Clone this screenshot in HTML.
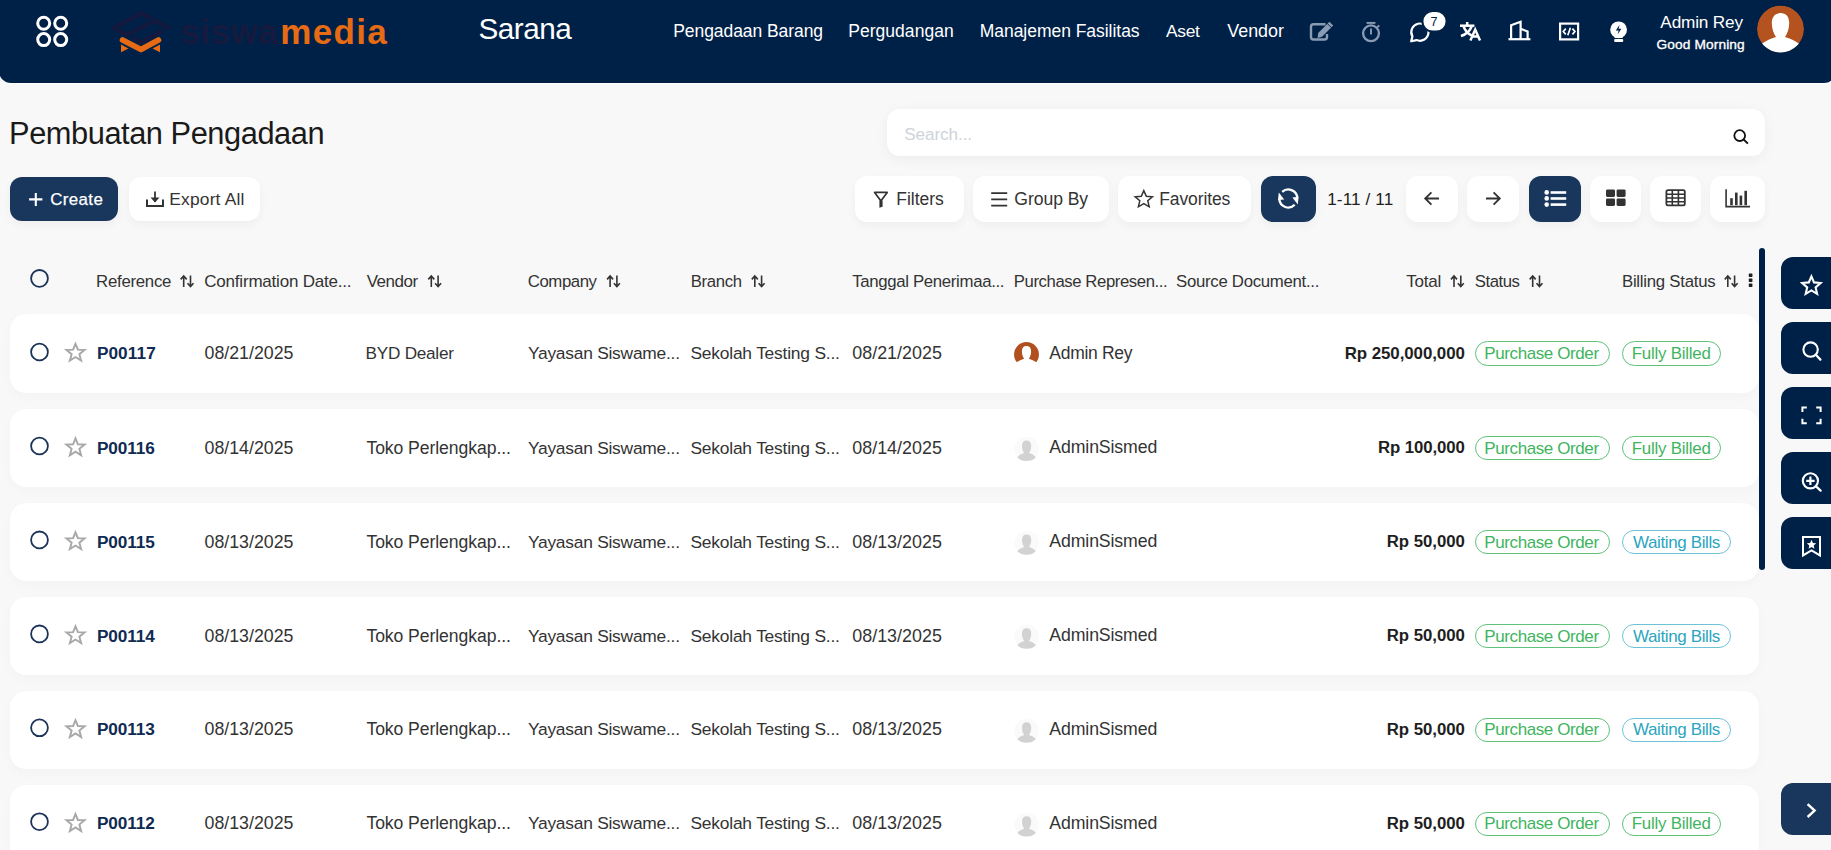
<!DOCTYPE html>
<html><head><meta charset="utf-8">
<style>

*{box-sizing:border-box;margin:0;padding:0}
html,body{width:1831px;height:850px;overflow:hidden;background:#f8f8f8;font-family:"Liberation Sans",sans-serif}
.t{position:absolute;white-space:nowrap}
.b{position:absolute}
svg{position:absolute;overflow:visible}
</style></head><body>

<div class="b" style="left:-1px;top:0;width:1837px;height:83px;background:#002147;border-radius:0 0 12px 12px;box-shadow:0 1px 0 #fff"></div>
<svg style="left:0;top:0" width="100" height="80"><g fill="none" stroke="#fff" stroke-width="3"><circle cx="43.7" cy="23.2" r="6"/><circle cx="60.7" cy="23.2" r="6"/><circle cx="43.7" cy="39.6" r="6"/><circle cx="60.7" cy="39.6" r="6"/></g></svg>
<svg style="left:0;top:0" width="200" height="80"><g fill="none" stroke="#141a3f" stroke-width="4.4" stroke-linecap="round" stroke-linejoin="round"><path d="M149,17.5 L141,13.3 L114,28 L127,35 L155,20.5 L169,28"/><path d="M161,31.5 L141,42.5 L134,38.5"/></g><polyline points="122.5,40 141,49.5 158.5,40" fill="none" stroke="#e66b14" stroke-width="5.6" stroke-linecap="round" stroke-linejoin="round"/><path d="M121,44.5 L121,52.2 L128.5,48.5Z M160,44.5 L160,52.2 L152.5,48.5Z" fill="#e66b14"/></svg>
<div class="t" style="left:180.20px;top:14.00px;font-size:35px;line-height:35px;letter-spacing:0.565px;color:#161a3e;font-weight:bold;">siswa</div>
<div class="t" style="left:280.24px;top:14.00px;font-size:35px;line-height:35px;letter-spacing:1.355px;color:#e66b14;font-weight:bold;">media</div>
<div class="t" style="left:478.40px;top:13.95px;font-size:29.7px;line-height:29.7px;letter-spacing:-0.460px;color:#fff;">Sarana</div>
<div class="t" style="left:673.20px;top:23.29px;font-size:17.5px;line-height:17.5px;letter-spacing:-0.061px;color:#fff;">Pengadaan Barang</div>
<div class="t" style="left:848.20px;top:23.29px;font-size:17.5px;line-height:17.5px;letter-spacing:0.042px;color:#fff;">Pergudangan</div>
<div class="t" style="left:979.70px;top:23.29px;font-size:17.5px;line-height:17.5px;letter-spacing:-0.031px;color:#fff;">Manajemen Fasilitas</div>
<div class="t" style="left:1166.00px;top:23.34px;font-size:17.4px;line-height:17.4px;letter-spacing:-0.293px;color:#fff;">Aset</div>
<div class="t" style="left:1227.22px;top:23.09px;font-size:17.9px;line-height:17.9px;letter-spacing:0.016px;color:#fff;">Vendor</div>
<svg style="left:0;top:0" width="1831" height="83"><path d="M1325.5,24.2 H1313.5 a2.5,2.5 0 0 0 -2.5,2.5 V37 a2.5,2.5 0 0 0 2.5,2.5 H1324.5 a2.5,2.5 0 0 0 2.5,-2.5 V34" fill="none" stroke="#8a9cb4" stroke-width="2.4"/><path d="M1317.6,38 L1318.2,33 L1329.4,21.8 L1333.2,25.6 L1322,36.8 Z" fill="#8a9cb4"/><path d="M1327.4,23.6 L1331.4,27.6" stroke="#002147" stroke-width="0.9"/><circle cx="1371" cy="33.3" r="7.9" fill="none" stroke="#8a9cb4" stroke-width="2.3"/><path d="M1366.6,22.9 H1375.4" stroke="#8a9cb4" stroke-width="1.9"/><path d="M1371,28.5 V34.5" stroke="#8a9cb4" stroke-width="1.9"/><path d="M1377.2,27.4 L1379.2,25.4" stroke="#8a9cb4" stroke-width="2"/><path d="M1412.4,36.4 A8.6,8.6 0 1 1 1416.6,40.1 L1411.2,41.3 Z" fill="none" stroke="#fff" stroke-width="2.2" stroke-linejoin="round"/><rect x="1422.4" y="11" width="24.2" height="20.6" rx="10.3" fill="#fff" stroke="#002147" stroke-width="2"/><g fill="none" stroke="#fff" stroke-width="2.5" stroke-linecap="butt"><path d="M1460,25.7 H1474.4"/><path d="M1467.2,22 V25.5"/><path d="M1463.6,26.5 Q1466,33 1472,35.6"/><path d="M1471.6,26.5 Q1469,33.5 1461,36"/><path d="M1470.4,40.5 L1475.2,29.6 L1480,40.5 M1472.2,36.6 H1478.2"/></g><g fill="none" stroke="#fff" stroke-width="2.2" stroke-linejoin="miter"><path d="M1511.1,39 V25.2 L1520.6,21.8 V39"/><path d="M1520.6,28.8 L1527.6,31.4 V39"/><path d="M1508.5,39.2 H1530.4"/></g><rect x="1560.1" y="23.6" width="18" height="15.8" fill="none" stroke="#fff" stroke-width="2.2"/><path d="M1565.8,28.6 L1563.3,31.5 L1565.8,34.4 M1572.4,28.6 L1574.9,31.5 L1572.4,34.4 M1570.4,27.8 L1567.8,35.2" fill="none" stroke="#fff" stroke-width="1.7"/><circle cx="1618.6" cy="29.8" r="8.4" fill="#fff"/><path d="M1614.2,34 L1623,34 L1622.6,38 L1614.6,38Z" fill="#fff"/><rect x="1614.2" y="39" width="9" height="2.9" rx="1" fill="#fff"/><path d="M1619.6,24.8 L1615.8,30.6 H1618.6 L1617.6,34.6 L1621.4,28.8 H1618.6 Z" fill="#002147"/></svg>
<div class="t" style="left:1430.56px;top:15.65px;font-size:12.5px;line-height:12.5px;letter-spacing:0.000px;color:#002147;">7</div>
<div class="t" style="left:1660.36px;top:13.76px;font-size:17.2px;line-height:17.2px;letter-spacing:-0.175px;color:#fff;">Admin Rey</div>
<div class="t" style="left:1656.56px;top:37.57px;font-size:13.7px;line-height:13.7px;letter-spacing:0.131px;color:#fff;-webkit-text-stroke:0.35px #fff">Good Morning</div>
<svg style="left:0;top:0" width="1831" height="83"><defs><clipPath id="ca"><circle cx="1780.5" cy="29" r="23.5"/></clipPath></defs><g clip-path="url(#ca)"><circle cx="1780.5" cy="29" r="23.5" fill="#b4531f"/><path transform="translate(1780.5,29) scale(1.89)" d="M0,-8.4 C-2.9,-8.4 -4.6,-6.6 -4.6,-3 C-4.6,0 -3.6,2.6 -2.4,4.2 C-5,5 -7.8,6.2 -9.5,7.6 L-14,10 V14 H14 V10 L9.5,7.6 C7.8,6.2 5,5 2.4,4.2 C3.6,2.6 4.6,0 4.6,-3 C4.6,-6.6 2.9,-8.4 0,-8.4Z" fill="#fff"/></g></svg>
<div class="t" style="left:9.10px;top:119.14px;font-size:30.8px;line-height:30.8px;letter-spacing:-0.456px;color:#1a1a1a;">Pembuatan Pengadaan</div>
<div class="b" style="left:887px;top:108.6px;width:878px;height:47.8px;background:#fff;border-radius:13px;box-shadow:0 3px 14px rgba(0,0,0,.05)"></div>
<div class="t" style="left:904.28px;top:126.44px;font-size:17.2px;line-height:17.2px;letter-spacing:-0.115px;color:#cdd3d9;">Search...</div>
<svg style="left:0;top:0" width="1831" height="200"><circle cx="1739.7" cy="135.6" r="5.4" fill="none" stroke="#111" stroke-width="1.8"/><path d="M1743.6,139.5 L1747.2,143" stroke="#111" stroke-width="1.9" stroke-linecap="square"/></svg>
<div class="b" style="left:10px;top:177px;width:108px;height:44px;background:#19365c;border-radius:12px;box-shadow:0 4px 10px rgba(0,0,0,.045)"></div>
<div class="b" style="left:129px;top:177px;width:131px;height:44px;background:#fff;border-radius:12px;box-shadow:0 4px 10px rgba(0,0,0,.045)"></div>
<div class="t" style="left:50.20px;top:191.91px;font-size:16.9px;line-height:16.9px;letter-spacing:0.380px;color:#fff;-webkit-text-stroke:0.25px #fff">Create</div>
<svg style="left:0;top:0" width="300" height="240"><path d="M35.8,192.9 V205.9 M29.1,199.4 H42.4" stroke="#fff" stroke-width="2.1"/><path d="M147,199.5 V206 H163 V199.5" fill="none" stroke="#333" stroke-width="2"/><path d="M155,191.5 V202" stroke="#333" stroke-width="1.8"/><path d="M150.5,197.5 L155,202.5 L159.5,197.5Z" fill="#333"/></svg>
<div class="t" style="left:169.26px;top:191.17px;font-size:17.4px;line-height:17.4px;letter-spacing:0.187px;color:#333;">Export All</div>
<div class="b" style="left:855px;top:176px;width:109px;height:46px;background:#fff;border-radius:12px;box-shadow:0 4px 10px rgba(0,0,0,.045)"></div>
<div class="b" style="left:973px;top:176px;width:136px;height:46px;background:#fff;border-radius:12px;box-shadow:0 4px 10px rgba(0,0,0,.045)"></div>
<div class="b" style="left:1118px;top:176px;width:133px;height:46px;background:#fff;border-radius:12px;box-shadow:0 4px 10px rgba(0,0,0,.045)"></div>
<div class="b" style="left:1261px;top:176px;width:55px;height:46px;background:#19365c;border-radius:12px;box-shadow:0 4px 10px rgba(0,0,0,.045)"></div>
<div class="b" style="left:1406px;top:176px;width:52px;height:46px;background:#fff;border-radius:12px;box-shadow:0 4px 10px rgba(0,0,0,.045)"></div>
<div class="b" style="left:1467px;top:176px;width:52px;height:46px;background:#fff;border-radius:12px;box-shadow:0 4px 10px rgba(0,0,0,.045)"></div>
<div class="b" style="left:1529px;top:176px;width:52px;height:46px;background:#19365c;border-radius:12px;box-shadow:0 4px 10px rgba(0,0,0,.045)"></div>
<div class="b" style="left:1590px;top:176px;width:51px;height:46px;background:#fff;border-radius:12px;box-shadow:0 4px 10px rgba(0,0,0,.045)"></div>
<div class="b" style="left:1650px;top:176px;width:51px;height:46px;background:#fff;border-radius:12px;box-shadow:0 4px 10px rgba(0,0,0,.045)"></div>
<div class="b" style="left:1710px;top:176px;width:55px;height:46px;background:#fff;border-radius:12px;box-shadow:0 4px 10px rgba(0,0,0,.045)"></div>
<div class="t" style="left:896.34px;top:191.12px;font-size:17.5px;line-height:17.5px;letter-spacing:-0.037px;color:#333;">Filters</div>
<div class="t" style="left:1014.34px;top:190.56px;font-size:17.6px;line-height:17.6px;letter-spacing:-0.071px;color:#333;">Group By</div>
<div class="t" style="left:1159.20px;top:190.61px;font-size:17.5px;line-height:17.5px;letter-spacing:-0.105px;color:#333;">Favorites</div>
<div class="t" style="left:1327.20px;top:191.31px;font-size:17.1px;line-height:17.1px;letter-spacing:0.128px;color:#222;">1-11 / 11</div>
<svg style="left:0;top:0" width="1831" height="240"><path d="M874.6,192.4 H887.2 L881.2,200.6 L880.6,200.6 Z" fill="none" stroke="#333" stroke-width="1.7" stroke-linejoin="round"/><path d="M879.4,200.4 H882.6 V206.8 L879.4,207.8 Z" fill="#333"/><path d="M991.2,193.1 H1007.2 M991.2,199.4 H1007.2 M991.2,205.6 H1007.2" stroke="#333" stroke-width="1.7"/><path d="M1143.8,190.6 L1146.3,196.3 L1152.4,196.8 L1147.8,200.8 L1149.2,206.8 L1143.8,203.6 L1138.4,206.8 L1139.8,200.8 L1135.2,196.8 L1141.3,196.3 Z" fill="none" stroke="#333" stroke-width="1.5" stroke-linejoin="miter"/><g fill="none" stroke="#fff" stroke-width="2.3"><path d="M1282.2,191.9 A9,9 0 0 1 1297.3,197.6"/><path d="M1294.7,204.8 A9,9 0 0 1 1279.3,199.2"/></g><path d="M1292.4,197.4 L1298.6,196.8 L1297.8,204.4Z M1284.2,199.4 L1278,200 L1278.8,192.4Z" fill="#fff"/><path d="M1439,198.5 H1425.6 M1431.4,192.4 L1425.2,198.5 L1431.4,204.6" fill="none" stroke="#333" stroke-width="1.8"/><path d="M1486,198.5 H1499.4 M1493.6,192.4 L1499.8,198.5 L1493.6,204.6" fill="none" stroke="#333" stroke-width="1.8"/><g fill="#fff"><circle cx="1546.7" cy="192.4" r="2.3"/><circle cx="1546.7" cy="198.4" r="2.3"/><circle cx="1546.7" cy="204.6" r="2.3"/><rect x="1550.6" y="191.2" width="15.6" height="2.6"/><rect x="1550.6" y="197.2" width="15.6" height="2.6"/><rect x="1550.6" y="203.3" width="15.6" height="2.6"/></g><g fill="#333"><rect x="1606" y="189.4" width="9" height="7.6" rx="1.4"/><rect x="1616.6" y="189.4" width="9" height="7.6" rx="1.4"/><rect x="1606" y="198.4" width="9" height="7.6" rx="1.4"/><rect x="1616.6" y="198.4" width="9" height="7.6" rx="1.4"/></g><rect x="1666.4" y="190.2" width="18.4" height="15.2" rx="1.6" fill="none" stroke="#333" stroke-width="1.8"/><path d="M1666.4,194.2 H1684.8 M1666.4,198 H1684.8 M1666.4,201.8 H1684.8 M1672.3,190.2 V205.4 M1678.4,190.2 V205.4" stroke="#333" stroke-width="1.6"/><path d="M1726.1,189.2 V206.6 H1750" fill="none" stroke="#333" stroke-width="1.6"/><g fill="#333"><rect x="1730.2" y="198.2" width="2.6" height="7"/><rect x="1735" y="192.6" width="2.6" height="12.6"/><rect x="1739.6" y="195.6" width="2.6" height="9.6"/><rect x="1744.4" y="190.8" width="2.6" height="14.4"/></g></svg>
<svg style="left:0;top:0" width="1831" height="850"><circle cx="39.5" cy="278.4" r="8.4" fill="none" stroke="#1b3358" stroke-width="1.8"/></svg>
<div class="t" style="left:96.12px;top:273.80px;font-size:16.8px;line-height:16.8px;letter-spacing:-0.272px;color:#333;">Reference</div>
<div class="t" style="left:204.28px;top:273.00px;font-size:17.0px;line-height:17.0px;letter-spacing:-0.204px;color:#333;">Confirmation Date...</div>
<div class="t" style="left:366.72px;top:273.00px;font-size:17.0px;line-height:17.0px;letter-spacing:-0.496px;color:#333;">Vendor</div>
<div class="t" style="left:527.84px;top:273.80px;font-size:16.8px;line-height:16.8px;letter-spacing:-0.457px;color:#333;">Company</div>
<div class="t" style="left:690.70px;top:273.85px;font-size:16.7px;line-height:16.7px;letter-spacing:-0.288px;color:#333;">Branch</div>
<div class="t" style="left:852.14px;top:273.80px;font-size:16.8px;line-height:16.8px;letter-spacing:-0.326px;color:#333;">Tanggal Penerimaa...</div>
<div class="t" style="left:1013.84px;top:273.85px;font-size:16.7px;line-height:16.7px;letter-spacing:-0.400px;color:#333;">Purchase Represen...</div>
<div class="t" style="left:1176.06px;top:273.80px;font-size:16.8px;line-height:16.8px;letter-spacing:-0.296px;color:#333;">Source Document...</div>
<div class="t" style="left:1406.36px;top:273.00px;font-size:17.0px;line-height:17.0px;letter-spacing:-0.260px;color:#333;">Total</div>
<div class="t" style="left:1474.78px;top:273.85px;font-size:16.7px;line-height:16.7px;letter-spacing:-0.444px;color:#333;">Status</div>
<div class="t" style="left:1621.98px;top:273.80px;font-size:16.8px;line-height:16.8px;letter-spacing:-0.258px;color:#333;">Billing Status</div>
<svg style="left:0;top:0" width="1831" height="850"><path d="M183.7,287 V276.2 M180.7,279.4 L183.7,276 L186.7,279.4" fill="none" stroke="#333" stroke-width="1.6"/><path d="M190.5,275.6 V286.4 M187.5,283.2 L190.5,286.6 L193.5,283.2" fill="none" stroke="#333" stroke-width="1.6"/><path d="M431.3,287 V276.2 M428.3,279.4 L431.3,276 L434.3,279.4" fill="none" stroke="#333" stroke-width="1.6"/><path d="M438.1,275.6 V286.4 M435.1,283.2 L438.1,286.6 L441.1,283.2" fill="none" stroke="#333" stroke-width="1.6"/><path d="M610.1,287 V276.2 M607.1,279.4 L610.1,276 L613.1,279.4" fill="none" stroke="#333" stroke-width="1.6"/><path d="M616.9,275.6 V286.4 M613.9,283.2 L616.9,286.6 L619.9,283.2" fill="none" stroke="#333" stroke-width="1.6"/><path d="M754.8000000000001,287 V276.2 M751.8000000000001,279.4 L754.8000000000001,276 L757.8000000000001,279.4" fill="none" stroke="#333" stroke-width="1.6"/><path d="M761.6,275.6 V286.4 M758.6,283.2 L761.6,286.6 L764.6,283.2" fill="none" stroke="#333" stroke-width="1.6"/><path d="M1454.0,287 V276.2 M1451.0,279.4 L1454.0,276 L1457.0,279.4" fill="none" stroke="#333" stroke-width="1.6"/><path d="M1460.8,275.6 V286.4 M1457.8,283.2 L1460.8,286.6 L1463.8,283.2" fill="none" stroke="#333" stroke-width="1.6"/><path d="M1532.7,287 V276.2 M1529.7,279.4 L1532.7,276 L1535.7,279.4" fill="none" stroke="#333" stroke-width="1.6"/><path d="M1539.5,275.6 V286.4 M1536.5,283.2 L1539.5,286.6 L1542.5,283.2" fill="none" stroke="#333" stroke-width="1.6"/><path d="M1727.8,287 V276.2 M1724.8,279.4 L1727.8,276 L1730.8,279.4" fill="none" stroke="#333" stroke-width="1.6"/><path d="M1734.6,275.6 V286.4 M1731.6,283.2 L1734.6,286.6 L1737.6,283.2" fill="none" stroke="#333" stroke-width="1.6"/><g fill="#222"><rect x="1748.8" y="273.6" width="3.6" height="3.4" rx="0.6"/><rect x="1748.8" y="278.6" width="3.6" height="3.4" rx="0.6"/><rect x="1748.8" y="283.6" width="3.6" height="3.4" rx="0.6"/></g></svg>
<div class="b" style="left:1759px;top:248px;width:6px;height:321.5px;background:#002147;border-radius:3px"></div>
<div class="b" style="left:1781px;top:257px;width:70px;height:52px;background:#002147;border-radius:12px"></div>
<div class="b" style="left:1781px;top:322px;width:70px;height:52px;background:#002147;border-radius:12px"></div>
<div class="b" style="left:1781px;top:387px;width:70px;height:52px;background:#002147;border-radius:12px"></div>
<div class="b" style="left:1781px;top:452px;width:70px;height:52px;background:#002147;border-radius:12px"></div>
<div class="b" style="left:1781px;top:517px;width:70px;height:52px;background:#002147;border-radius:12px"></div>
<div class="b" style="left:1781px;top:783px;width:70px;height:52px;background:#19365c;border-radius:12px"></div>
<svg style="left:0;top:0" width="1831" height="850"><path transform="translate(0,1)" d="M1811.4,275.4 L1814,281.4 L1820.6,282 L1815.6,286.4 L1817.1,292.8 L1811.4,289.4 L1805.7,292.8 L1807.2,286.4 L1802.2,282 L1808.8,281.4 Z" fill="none" stroke="#fff" stroke-width="2.1" stroke-linejoin="miter"/><circle cx="1810.6" cy="349.6" r="7.2" fill="none" stroke="#fff" stroke-width="2.1"/><path d="M1815.8,354.8 L1820.4,359.6" stroke="#fff" stroke-width="2.3" stroke-linecap="round"/><path d="M1802.4,412 V407.6 H1806.8 M1816.2,407.6 H1820.6 V412 M1820.6,418.8 V423.2 H1816.2 M1806.8,423.2 H1802.4 V418.8" fill="none" stroke="#fff" stroke-width="2"/><circle cx="1810.4" cy="480.8" r="7.6" fill="none" stroke="#fff" stroke-width="2.1"/><path d="M1815.8,486.2 L1820.6,490.6" stroke="#fff" stroke-width="2.3" stroke-linecap="round"/><path d="M1810.4,476.6 V485 M1806.2,480.8 H1814.6" stroke="#fff" stroke-width="2.2"/><path d="M1803,537 H1820 V555.4 L1811.5,550.4 L1803,555.4 Z" fill="none" stroke="#fff" stroke-width="2" stroke-linejoin="miter"/><path d="M1811.5,539.8 L1812.9,543 L1816.2,543.3 L1813.7,545.5 L1814.4,548.8 L1811.5,547.1 L1808.6,548.8 L1809.3,545.5 L1806.8,543.3 L1810.1,543 Z" fill="#fff"/><path d="M1807.6,804.2 L1814.6,810.6 L1807.6,817" fill="none" stroke="#fff" stroke-width="2.4"/></svg>
<div class="b" style="left:10px;top:313.8px;width:1749px;height:79.4px;background:#fff;border-radius:16px;box-shadow:0 4px 12px rgba(0,0,0,.025)"></div>
<svg style="left:0;top:0" width="1831" height="850"><circle cx="39.5" cy="352.0" r="8.4" fill="none" stroke="#1b3358" stroke-width="1.8"/><path transform="translate(75.5,352.7) scale(0.925)" d="M0,-9.6 L2.6,-3.3 L9.8,-3 L4.2,1.6 L6.1,8.6 L0,4.7 L-6.1,8.6 L-4.2,1.6 L-9.8,-3 L-2.6,-3.3 Z" fill="none" stroke="#a8a8a8" stroke-width="2.1" stroke-linejoin="miter"/><circle cx="1026.5" cy="354.45" r="12.45" fill="#b24f1f"/><path transform="translate(1026.5,354.45)" d="M0,-8.4 C-2.9,-8.4 -4.6,-6.6 -4.6,-3 C-4.6,0 -3.6,2.6 -2.4,4.2 C-5,5 -7.8,6.2 -9.5,7.6 L-14,10 V14 H14 V10 L9.5,7.6 C7.8,6.2 5,5 2.4,4.2 C3.6,2.6 4.6,0 4.6,-3 C4.6,-6.6 2.9,-8.4 0,-8.4Z" fill="#fff"/></svg>
<div class="t" style="left:96.92px;top:345.20px;font-size:17.2px;line-height:17.2px;letter-spacing:0.096px;color:#0f2b52;font-weight:bold;">P00117</div>
<div class="t" style="left:204.50px;top:344.97px;font-size:17.8px;line-height:17.8px;letter-spacing:-0.002px;color:#333;">08/21/2025</div>
<div class="t" style="left:365.62px;top:344.50px;font-size:17.2px;line-height:17.2px;letter-spacing:-0.269px;color:#333;">BYD Dealer</div>
<div class="t" style="left:527.92px;top:345.17px;font-size:17.4px;line-height:17.4px;letter-spacing:-0.247px;color:#333;">Yayasan Siswame...</div>
<div class="t" style="left:690.42px;top:345.17px;font-size:17.4px;line-height:17.4px;letter-spacing:-0.205px;color:#333;">Sekolah Testing S...</div>
<div class="t" style="left:852.28px;top:344.92px;font-size:17.9px;line-height:17.9px;letter-spacing:0.007px;color:#333;">08/21/2025</div>
<div class="t" style="left:1049.36px;top:345.12px;font-size:17.5px;line-height:17.5px;letter-spacing:-0.308px;color:#333;">Admin Rey</div>
<div class="t" style="left:1344.70px;top:345.90px;font-size:16.9px;line-height:16.9px;letter-spacing:-0.074px;color:#1e1e1e;font-weight:bold;">Rp 250,000,000</div>
<div class="b" style="left:1475px;top:341.2px;width:135px;height:24.6px;border:1.2px solid #5fc27a;border-radius:13px"></div>
<div class="t" style="left:1484.34px;top:345.17px;font-size:17.0px;line-height:17.0px;letter-spacing:-0.406px;color:#3fb45e;">Purchase Order</div>
<div class="b" style="left:1621.6px;top:341.2px;width:99px;height:24.6px;border:1.2px solid #5fc27a;border-radius:13px"></div>
<div class="t" style="left:1631.76px;top:345.85px;font-size:16.9px;line-height:16.9px;letter-spacing:-0.229px;color:#3fb45e;">Fully Billed</div>
<div class="b" style="left:10px;top:409.1px;width:1749px;height:78px;background:#fff;border-radius:16px;box-shadow:0 4px 12px rgba(0,0,0,.025)"></div>
<svg style="left:0;top:0" width="1831" height="850"><circle cx="39.5" cy="446.0" r="8.4" fill="none" stroke="#1b3358" stroke-width="1.8"/><path transform="translate(75.5,447.3) scale(0.925)" d="M0,-9.6 L2.6,-3.3 L9.8,-3 L4.2,1.6 L6.1,8.6 L0,4.7 L-6.1,8.6 L-4.2,1.6 L-9.8,-3 L-2.6,-3.3 Z" fill="none" stroke="#a8a8a8" stroke-width="2.1" stroke-linejoin="miter"/><circle cx="1026.6" cy="448.90" r="12.2" fill="#fafafa"/><path transform="translate(1026.6,448.90)" d="M0,-8.4 C-2.9,-8.4 -4.6,-6.6 -4.6,-3 C-4.6,0 -3.6,2.6 -2.4,4.2 C-5,5 -7.6,6 -9.3,8.5 C-7,11 -3.6,12 0,12 C3.6,12 7,11 9.3,8.5 C7.6,6 5,5 2.4,4.2 C3.6,2.6 4.6,0 4.6,-3 C4.6,-6.6 2.9,-8.4 0,-8.4Z" fill="#d2d2d2"/></svg>
<div class="t" style="left:96.92px;top:440.08px;font-size:17.2px;line-height:17.2px;letter-spacing:-0.064px;color:#0f2b52;font-weight:bold;">P00116</div>
<div class="t" style="left:204.50px;top:439.78px;font-size:17.8px;line-height:17.8px;letter-spacing:-0.002px;color:#333;">08/14/2025</div>
<div class="t" style="left:366.42px;top:439.88px;font-size:17.6px;line-height:17.6px;letter-spacing:-0.071px;color:#333;">Toko Perlengkap...</div>
<div class="t" style="left:527.92px;top:439.98px;font-size:17.4px;line-height:17.4px;letter-spacing:-0.247px;color:#333;">Yayasan Siswame...</div>
<div class="t" style="left:690.42px;top:439.98px;font-size:17.4px;line-height:17.4px;letter-spacing:-0.205px;color:#333;">Sekolah Testing S...</div>
<div class="t" style="left:852.28px;top:439.73px;font-size:17.9px;line-height:17.9px;letter-spacing:0.007px;color:#333;">08/14/2025</div>
<div class="t" style="left:1049.36px;top:439.36px;font-size:17.7px;line-height:17.7px;letter-spacing:-0.126px;color:#333;">AdminSismed</div>
<div class="t" style="left:1378.06px;top:440.13px;font-size:16.8px;line-height:16.8px;letter-spacing:-0.102px;color:#1e1e1e;font-weight:bold;">Rp 100,000</div>
<div class="b" style="left:1475px;top:435.8px;width:135px;height:24.6px;border:1.2px solid #5fc27a;border-radius:13px"></div>
<div class="t" style="left:1484.34px;top:439.63px;font-size:17.0px;line-height:17.0px;letter-spacing:-0.406px;color:#3fb45e;">Purchase Order</div>
<div class="b" style="left:1621.6px;top:435.8px;width:99px;height:24.6px;border:1.2px solid #5fc27a;border-radius:13px"></div>
<div class="t" style="left:1631.76px;top:440.59px;font-size:16.9px;line-height:16.9px;letter-spacing:-0.229px;color:#3fb45e;">Fully Billed</div>
<div class="b" style="left:10px;top:503.0px;width:1749px;height:78px;background:#fff;border-radius:16px;box-shadow:0 4px 12px rgba(0,0,0,.025)"></div>
<svg style="left:0;top:0" width="1831" height="850"><circle cx="39.5" cy="539.9" r="8.4" fill="none" stroke="#1b3358" stroke-width="1.8"/><path transform="translate(75.5,541.2) scale(0.925)" d="M0,-9.6 L2.6,-3.3 L9.8,-3 L4.2,1.6 L6.1,8.6 L0,4.7 L-6.1,8.6 L-4.2,1.6 L-9.8,-3 L-2.6,-3.3 Z" fill="none" stroke="#a8a8a8" stroke-width="2.1" stroke-linejoin="miter"/><circle cx="1026.6" cy="542.83" r="12.2" fill="#fafafa"/><path transform="translate(1026.6,542.83)" d="M0,-8.4 C-2.9,-8.4 -4.6,-6.6 -4.6,-3 C-4.6,0 -3.6,2.6 -2.4,4.2 C-5,5 -7.6,6 -9.3,8.5 C-7,11 -3.6,12 0,12 C3.6,12 7,11 9.3,8.5 C7.6,6 5,5 2.4,4.2 C3.6,2.6 4.6,0 4.6,-3 C4.6,-6.6 2.9,-8.4 0,-8.4Z" fill="#d2d2d2"/></svg>
<div class="t" style="left:96.92px;top:533.91px;font-size:17.2px;line-height:17.2px;letter-spacing:-0.064px;color:#0f2b52;font-weight:bold;">P00115</div>
<div class="t" style="left:204.50px;top:533.61px;font-size:17.8px;line-height:17.8px;letter-spacing:-0.002px;color:#333;">08/13/2025</div>
<div class="t" style="left:366.42px;top:533.71px;font-size:17.6px;line-height:17.6px;letter-spacing:-0.071px;color:#333;">Toko Perlengkap...</div>
<div class="t" style="left:527.92px;top:533.81px;font-size:17.4px;line-height:17.4px;letter-spacing:-0.247px;color:#333;">Yayasan Siswame...</div>
<div class="t" style="left:690.42px;top:533.81px;font-size:17.4px;line-height:17.4px;letter-spacing:-0.205px;color:#333;">Sekolah Testing S...</div>
<div class="t" style="left:852.28px;top:533.56px;font-size:17.9px;line-height:17.9px;letter-spacing:0.007px;color:#333;">08/13/2025</div>
<div class="t" style="left:1049.36px;top:533.24px;font-size:17.7px;line-height:17.7px;letter-spacing:-0.126px;color:#333;">AdminSismed</div>
<div class="t" style="left:1386.70px;top:534.36px;font-size:16.8px;line-height:16.8px;letter-spacing:-0.020px;color:#1e1e1e;font-weight:bold;">Rp 50,000</div>
<div class="b" style="left:1475px;top:529.7px;width:135px;height:24.6px;border:1.2px solid #5fc27a;border-radius:13px"></div>
<div class="t" style="left:1484.34px;top:533.65px;font-size:17.0px;line-height:17.0px;letter-spacing:-0.406px;color:#3fb45e;">Purchase Order</div>
<div class="b" style="left:1622px;top:529.7px;width:109px;height:24.6px;border:1.2px solid #6cc3d6;border-radius:13px"></div>
<div class="t" style="left:1633.00px;top:533.65px;font-size:17.0px;line-height:17.0px;letter-spacing:-0.385px;color:#2ba5c0;">Waiting Bills</div>
<div class="b" style="left:10px;top:597.0px;width:1749px;height:78px;background:#fff;border-radius:16px;box-shadow:0 4px 12px rgba(0,0,0,.025)"></div>
<svg style="left:0;top:0" width="1831" height="850"><circle cx="39.5" cy="633.9" r="8.4" fill="none" stroke="#1b3358" stroke-width="1.8"/><path transform="translate(75.5,635.2) scale(0.925)" d="M0,-9.6 L2.6,-3.3 L9.8,-3 L4.2,1.6 L6.1,8.6 L0,4.7 L-6.1,8.6 L-4.2,1.6 L-9.8,-3 L-2.6,-3.3 Z" fill="none" stroke="#a8a8a8" stroke-width="2.1" stroke-linejoin="miter"/><circle cx="1026.6" cy="636.76" r="12.2" fill="#fafafa"/><path transform="translate(1026.6,636.76)" d="M0,-8.4 C-2.9,-8.4 -4.6,-6.6 -4.6,-3 C-4.6,0 -3.6,2.6 -2.4,4.2 C-5,5 -7.6,6 -9.3,8.5 C-7,11 -3.6,12 0,12 C3.6,12 7,11 9.3,8.5 C7.6,6 5,5 2.4,4.2 C3.6,2.6 4.6,0 4.6,-3 C4.6,-6.6 2.9,-8.4 0,-8.4Z" fill="#d2d2d2"/></svg>
<div class="t" style="left:96.92px;top:627.80px;font-size:17.2px;line-height:17.2px;letter-spacing:-0.064px;color:#0f2b52;font-weight:bold;">P00114</div>
<div class="t" style="left:204.50px;top:627.84px;font-size:17.8px;line-height:17.8px;letter-spacing:-0.002px;color:#333;">08/13/2025</div>
<div class="t" style="left:366.42px;top:627.54px;font-size:17.6px;line-height:17.6px;letter-spacing:-0.071px;color:#333;">Toko Perlengkap...</div>
<div class="t" style="left:527.92px;top:627.64px;font-size:17.4px;line-height:17.4px;letter-spacing:-0.247px;color:#333;">Yayasan Siswame...</div>
<div class="t" style="left:690.42px;top:627.64px;font-size:17.4px;line-height:17.4px;letter-spacing:-0.205px;color:#333;">Sekolah Testing S...</div>
<div class="t" style="left:852.28px;top:627.79px;font-size:17.9px;line-height:17.9px;letter-spacing:0.007px;color:#333;">08/13/2025</div>
<div class="t" style="left:1049.36px;top:627.12px;font-size:17.7px;line-height:17.7px;letter-spacing:-0.126px;color:#333;">AdminSismed</div>
<div class="t" style="left:1386.70px;top:628.24px;font-size:16.8px;line-height:16.8px;letter-spacing:-0.020px;color:#1e1e1e;font-weight:bold;">Rp 50,000</div>
<div class="b" style="left:1475px;top:623.7px;width:135px;height:24.6px;border:1.2px solid #5fc27a;border-radius:13px"></div>
<div class="t" style="left:1484.34px;top:627.81px;font-size:17.0px;line-height:17.0px;letter-spacing:-0.406px;color:#3fb45e;">Purchase Order</div>
<div class="b" style="left:1622px;top:623.7px;width:109px;height:24.6px;border:1.2px solid #6cc3d6;border-radius:13px"></div>
<div class="t" style="left:1633.00px;top:627.81px;font-size:17.0px;line-height:17.0px;letter-spacing:-0.385px;color:#2ba5c0;">Waiting Bills</div>
<div class="b" style="left:10px;top:690.9px;width:1749px;height:78px;background:#fff;border-radius:16px;box-shadow:0 4px 12px rgba(0,0,0,.025)"></div>
<svg style="left:0;top:0" width="1831" height="850"><circle cx="39.5" cy="727.8" r="8.4" fill="none" stroke="#1b3358" stroke-width="1.8"/><path transform="translate(75.5,729.1) scale(0.925)" d="M0,-9.6 L2.6,-3.3 L9.8,-3 L4.2,1.6 L6.1,8.6 L0,4.7 L-6.1,8.6 L-4.2,1.6 L-9.8,-3 L-2.6,-3.3 Z" fill="none" stroke="#a8a8a8" stroke-width="2.1" stroke-linejoin="miter"/><circle cx="1026.6" cy="730.69" r="12.2" fill="#fafafa"/><path transform="translate(1026.6,730.69)" d="M0,-8.4 C-2.9,-8.4 -4.6,-6.6 -4.6,-3 C-4.6,0 -3.6,2.6 -2.4,4.2 C-5,5 -7.6,6 -9.3,8.5 C-7,11 -3.6,12 0,12 C3.6,12 7,11 9.3,8.5 C7.6,6 5,5 2.4,4.2 C3.6,2.6 4.6,0 4.6,-3 C4.6,-6.6 2.9,-8.4 0,-8.4Z" fill="#d2d2d2"/></svg>
<div class="t" style="left:96.92px;top:721.45px;font-size:17.2px;line-height:17.2px;letter-spacing:-0.064px;color:#0f2b52;font-weight:bold;">P00113</div>
<div class="t" style="left:204.50px;top:720.59px;font-size:17.8px;line-height:17.8px;letter-spacing:-0.002px;color:#333;">08/13/2025</div>
<div class="t" style="left:366.42px;top:720.69px;font-size:17.6px;line-height:17.6px;letter-spacing:-0.071px;color:#333;">Toko Perlengkap...</div>
<div class="t" style="left:527.92px;top:720.79px;font-size:17.4px;line-height:17.4px;letter-spacing:-0.247px;color:#333;">Yayasan Siswame...</div>
<div class="t" style="left:690.42px;top:720.79px;font-size:17.4px;line-height:17.4px;letter-spacing:-0.205px;color:#333;">Sekolah Testing S...</div>
<div class="t" style="left:852.28px;top:720.54px;font-size:17.9px;line-height:17.9px;letter-spacing:0.007px;color:#333;">08/13/2025</div>
<div class="t" style="left:1049.36px;top:721.00px;font-size:17.7px;line-height:17.7px;letter-spacing:-0.126px;color:#333;">AdminSismed</div>
<div class="t" style="left:1386.70px;top:721.99px;font-size:16.8px;line-height:16.8px;letter-spacing:-0.020px;color:#1e1e1e;font-weight:bold;">Rp 50,000</div>
<div class="b" style="left:1475px;top:717.6px;width:135px;height:24.6px;border:1.2px solid #5fc27a;border-radius:13px"></div>
<div class="t" style="left:1484.34px;top:721.18px;font-size:17.0px;line-height:17.0px;letter-spacing:-0.406px;color:#3fb45e;">Purchase Order</div>
<div class="b" style="left:1622px;top:717.6px;width:109px;height:24.6px;border:1.2px solid #6cc3d6;border-radius:13px"></div>
<div class="t" style="left:1633.00px;top:721.18px;font-size:17.0px;line-height:17.0px;letter-spacing:-0.385px;color:#2ba5c0;">Waiting Bills</div>
<div class="b" style="left:10px;top:784.8px;width:1749px;height:78px;background:#fff;border-radius:16px;box-shadow:0 4px 12px rgba(0,0,0,.025)"></div>
<svg style="left:0;top:0" width="1831" height="850"><circle cx="39.5" cy="821.7" r="8.4" fill="none" stroke="#1b3358" stroke-width="1.8"/><path transform="translate(75.5,823.0) scale(0.925)" d="M0,-9.6 L2.6,-3.3 L9.8,-3 L4.2,1.6 L6.1,8.6 L0,4.7 L-6.1,8.6 L-4.2,1.6 L-9.8,-3 L-2.6,-3.3 Z" fill="none" stroke="#a8a8a8" stroke-width="2.1" stroke-linejoin="miter"/><circle cx="1026.6" cy="824.62" r="12.2" fill="#fafafa"/><path transform="translate(1026.6,824.62)" d="M0,-8.4 C-2.9,-8.4 -4.6,-6.6 -4.6,-3 C-4.6,0 -3.6,2.6 -2.4,4.2 C-5,5 -7.6,6 -9.3,8.5 C-7,11 -3.6,12 0,12 C3.6,12 7,11 9.3,8.5 C7.6,6 5,5 2.4,4.2 C3.6,2.6 4.6,0 4.6,-3 C4.6,-6.6 2.9,-8.4 0,-8.4Z" fill="#d2d2d2"/></svg>
<div class="t" style="left:96.92px;top:815.11px;font-size:17.2px;line-height:17.2px;letter-spacing:-0.064px;color:#0f2b52;font-weight:bold;">P00112</div>
<div class="t" style="left:204.50px;top:814.52px;font-size:17.8px;line-height:17.8px;letter-spacing:-0.002px;color:#333;">08/13/2025</div>
<div class="t" style="left:366.42px;top:814.62px;font-size:17.6px;line-height:17.6px;letter-spacing:-0.071px;color:#333;">Toko Perlengkap...</div>
<div class="t" style="left:527.92px;top:814.72px;font-size:17.4px;line-height:17.4px;letter-spacing:-0.247px;color:#333;">Yayasan Siswame...</div>
<div class="t" style="left:690.42px;top:814.72px;font-size:17.4px;line-height:17.4px;letter-spacing:-0.205px;color:#333;">Sekolah Testing S...</div>
<div class="t" style="left:852.28px;top:815.46px;font-size:17.9px;line-height:17.9px;letter-spacing:0.007px;color:#333;">08/13/2025</div>
<div class="t" style="left:1049.36px;top:814.88px;font-size:17.7px;line-height:17.7px;letter-spacing:-0.126px;color:#333;">AdminSismed</div>
<div class="t" style="left:1386.70px;top:815.71px;font-size:16.8px;line-height:16.8px;letter-spacing:-0.020px;color:#1e1e1e;font-weight:bold;">Rp 50,000</div>
<div class="b" style="left:1475px;top:811.5px;width:135px;height:24.6px;border:1.2px solid #5fc27a;border-radius:13px"></div>
<div class="t" style="left:1484.34px;top:815.31px;font-size:17.0px;line-height:17.0px;letter-spacing:-0.406px;color:#3fb45e;">Purchase Order</div>
<div class="b" style="left:1621.6px;top:811.5px;width:99px;height:24.6px;border:1.2px solid #5fc27a;border-radius:13px"></div>
<div class="t" style="left:1631.76px;top:816.17px;font-size:16.9px;line-height:16.9px;letter-spacing:-0.229px;color:#3fb45e;">Fully Billed</div>
</body></html>
